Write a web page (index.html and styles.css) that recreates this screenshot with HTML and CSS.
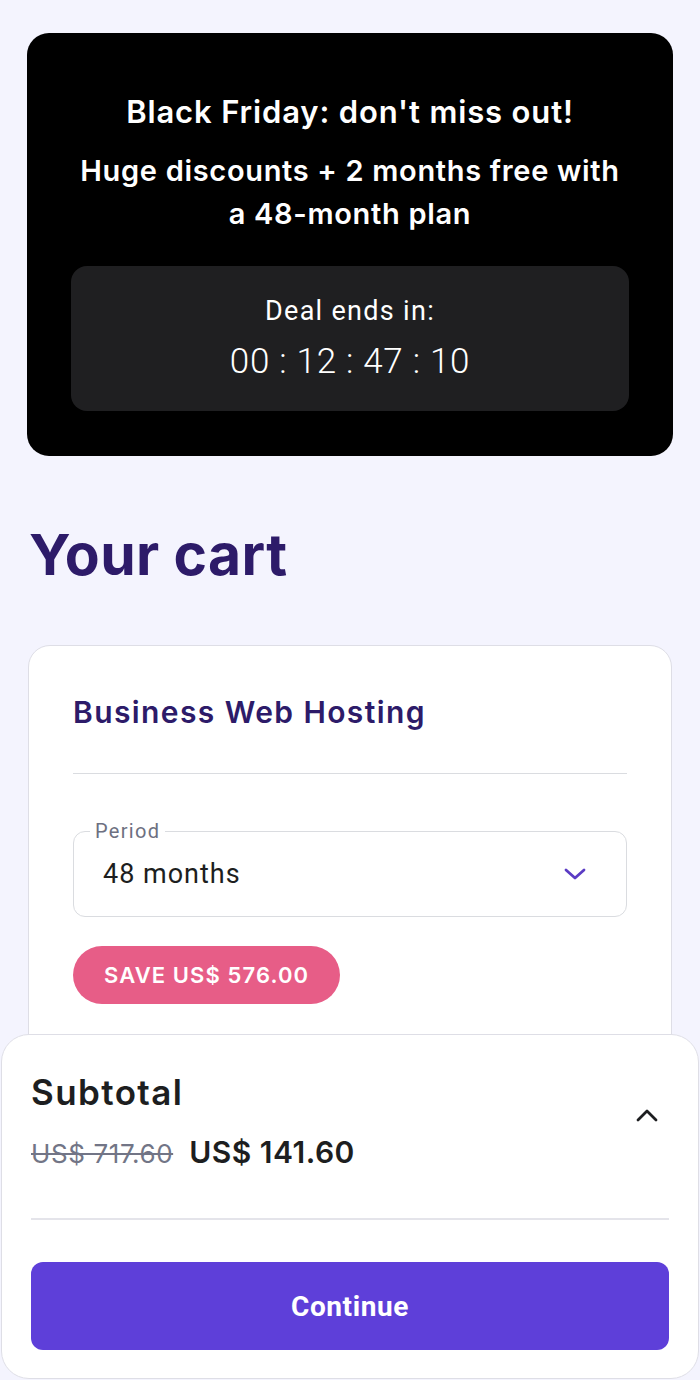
FILE: index.html
```html
<!DOCTYPE html>
<html lang="en">
<head>
<meta charset="utf-8">
<title>Your cart</title>
<link rel="stylesheet" href="styles.css">
</head>
<body>
<main class="page">
  <section class="banner">
    <h2 class="banner-title">Black Friday: don't miss out!</h2>
    <p class="banner-sub">Huge discounts + 2 months free with<br>a 48-month plan</p>
    <div class="countdown">
      <div class="countdown-label">Deal ends in:</div>
      <div class="countdown-time">00 : 12 : 47 : 10</div>
    </div>
  </section>

  <h1 class="cart-title">Your cart</h1>

  <section class="card">
    <h3 class="product">Business Web Hosting</h3>
    <hr class="divider">
    <div class="select">
      <span class="select-label">Period</span>
      <span class="select-value">48 months</span>
      <svg class="chev-down" width="22" height="12" viewBox="0 0 22 12"><path d="M2 2 L11 10 L20 2" fill="none" stroke="#5b3cc4" stroke-width="2.8" stroke-linecap="round" stroke-linejoin="round"/></svg>
    </div>
    <div class="save">SAVE US$ 576.00</div>
  </section>
</main>

<aside class="sheet">
  <div class="sheet-row">
    <div class="totals">
      <div class="subtotal">Subtotal</div>
      <div class="prices"><span class="old">US$ 717.60</span><span class="new">US$ 141.60</span></div>
    </div>
    <svg class="chev-up" width="22" height="14" viewBox="0 0 22 14"><path d="M2 12 L11 3 L20 12" fill="none" stroke="#1d1e20" stroke-width="2.8" stroke-linecap="round" stroke-linejoin="round"/></svg>
  </div>
  <hr class="sheet-divider">
  <button class="continue">Continue</button>
</aside>
</body>
</html>
```

FILE: styles.css
```css
* { box-sizing: border-box; }
html, body { margin: 0; padding: 0; }
body {
  background: #f4f4fe;
  font-family: "Inter", "DejaVu Sans", sans-serif;
  color: #1d1e20;
  height: 1380px;
  overflow: hidden;
}
.page {
  padding: 33px 27px 0 27px;
}
.banner {
  background: #000;
  border-radius: 22px;
  padding: 61px 30px 45px 30px;
  text-align: center;
  color: #fff;
}
.banner-title {
  margin: 0;
  font-size: 31px;
  line-height: 36px;
  font-weight: 600;
  letter-spacing: 0.85px;
}
.banner-sub {
  margin: 19px 0 0 0;
  font-size: 29px;
  line-height: 43px;
  font-weight: 600;
  letter-spacing: 0.68px;
}
.countdown {
  margin-top: 31px;
  margin-left: 14px;
  margin-right: 14px;
  background: #1f1f21;
  border-radius: 16px;
  height: 145px;
  display: flex;
  flex-direction: column;
  align-items: center;
  padding-top: 28px;
}
.countdown-label {
  font-family: "Roboto", sans-serif;
  font-size: 27px;
  line-height: 34px;
  font-weight: 400;
  letter-spacing: 1.3px;
}
.countdown-time {
  margin-top: 14px;
  font-family: "Roboto", sans-serif;
  font-size: 35px;
  line-height: 40px;
  font-weight: 300;
  letter-spacing: 0.7px;
}
.cart-title {
  margin: 64px 0 0 2px;
  font-size: 57px;
  line-height: 70px;
  font-weight: 700;
  color: #2d1b69;
  letter-spacing: 0.4px;
}
.card {
  margin: 55px 1px 0 1px;
  background: #fff;
  border: 1px solid #dedee6;
  border-radius: 22px;
  padding: 48px 44px 200px 44px;
}
.product {
  margin: 0;
  font-size: 30px;
  line-height: 36px;
  font-weight: 600;
  color: #2d1b69;
  letter-spacing: 1.4px;
}
.divider {
  margin: 43px 0 0 0;
  border: 0;
  border-top: 1px solid #dadce0;
}
.select {
  position: relative;
  margin-top: 57px;
  height: 86px;
  border: 1px solid #dadce0;
  border-radius: 12px;
  display: flex;
  align-items: center;
  justify-content: space-between;
  padding: 0 40px 0 29px;
}
.select-label {
  position: absolute;
  left: 16px;
  top: -13px;
  padding: 0 5px;
  background: #fff;
  font-family: "Roboto", sans-serif;
  font-size: 20px;
  line-height: 24px;
  letter-spacing: 1.3px;
  color: #6d7081;
}
.select-value {
  font-family: "Roboto", sans-serif;
  font-size: 27px;
  line-height: 34px;
  letter-spacing: 1px;
  color: #1d1e20;
}
.save {
  display: inline-block;
  margin-top: 29px;
  height: 58px;
  line-height: 58px;
  padding: 0 31px;
  border-radius: 29px;
  background: #e75d87;
  color: #fff;
  font-size: 22px;
  font-weight: 600;
  letter-spacing: 1.1px;
}
.sheet {
  position: fixed;
  left: 1px;
  right: 1px;
  bottom: 1px;
  background: #fff;
  border: 1px solid #dedee6;
  border-radius: 28px;
  padding: 36px 29px 28px 29px;
}
.sheet-row {
  display: flex;
  align-items: center;
  justify-content: space-between;
}
.subtotal {
  font-size: 35px;
  line-height: 42px;
  font-weight: 600;
  letter-spacing: 1.4px;
}
.prices {
  margin-top: 21px;
  display: flex;
  align-items: baseline;
  gap: 16px;
  line-height: 36px;
}
.old {
  font-size: 26px;
  color: #727586;
  text-decoration: line-through;
  letter-spacing: 0.6px;
}
.new {
  font-size: 30px;
  font-weight: 600;
  letter-spacing: 0.5px;
}
.chev-up {
  margin-right: 11px;
  margin-bottom: 14px;
}
.sheet-divider {
  margin: 46px 0 0 0;
  border: 0;
  border-top: 2px solid #e4e4ea;
}
.continue {
  display: block;
  width: 100%;
  margin-top: 42px;
  height: 88px;
  border: 0;
  border-radius: 12px;
  background: #5e3fd9;
  color: #fff;
  font-family: "Roboto", sans-serif;
  font-size: 28px;
  font-weight: 700;
  letter-spacing: 0.6px;
}
```
